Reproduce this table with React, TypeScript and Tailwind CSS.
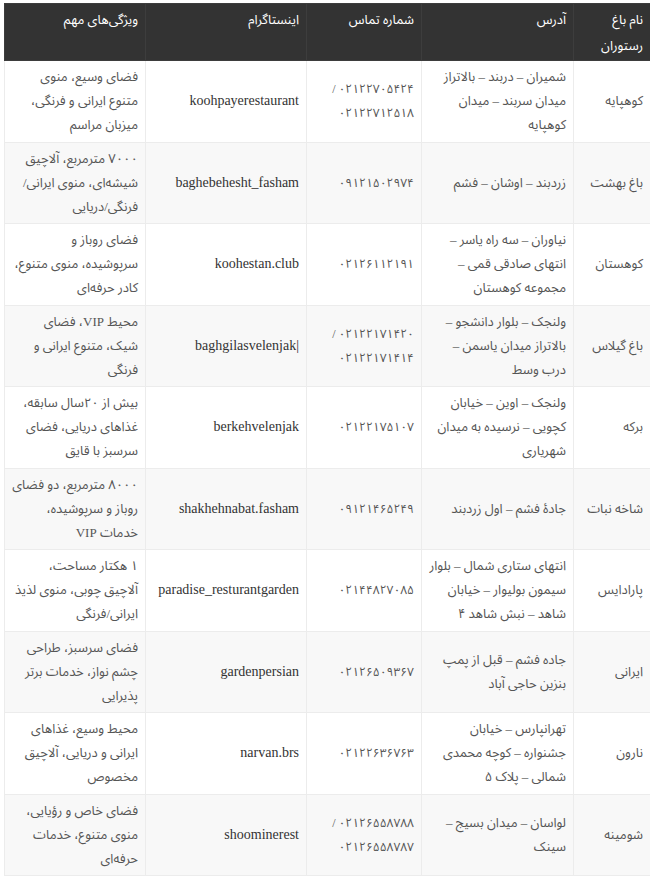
import React from 'react'

type Row = {
  name: string
  address: string
  phone: string[]
  insta: string
  features: string
}

const ROWS: Row[] = [
  {
    name: 'کوهپایه',
    address: 'شمیران – دربند – بالاتراز میدان سربند – میدان کوهپایه',
    phone: ['۰۲۱۲۲۷۰۵۴۲۴ /', '۰۲۱۲۲۷۱۲۵۱۸'],
    insta: 'koohpayerestaurant',
    features: 'فضای وسیع، منوی متنوع ایرانی و فرنگی، میزبان مراسم',
  },
  {
    name: 'باغ بهشت',
    address: 'زردبند – اوشان – فشم',
    phone: ['۰۹۱۲۱۵۰۲۹۷۴'],
    insta: 'baghebehesht_fasham',
    features: '۷۰۰۰ مترمربع، آلاچیق شیشه‌ای، منوی ایرانی/ فرنگی/دریایی',
  },
  {
    name: 'کوهستان',
    address: 'نیاوران – سه راه یاسر – انتهای صادقی قمی – مجموعه کوهستان',
    phone: ['۰۲۱۲۶۱۱۲۱۹۱'],
    insta: 'koohestan.club',
    features: 'فضای روباز و سرپوشیده، منوی متنوع، کادر حرفه‌ای',
  },
  {
    name: 'باغ گیلاس',
    address: 'ولنجک – بلوار دانشجو – بالاتراز میدان یاسمن – درب وسط',
    phone: ['۰۲۱۲۲۱۷۱۴۲۰ /', '۰۲۱۲۲۱۷۱۴۱۴'],
    insta: 'baghgilasvelenjak|',
    features: 'محیط VIP، فضای شیک، متنوع ایرانی و فرنگی',
  },
  {
    name: 'برکه',
    address: 'ولنجک – اوین – خیابان کچویی – نرسیده به میدان شهریاری',
    phone: ['۰۲۱۲۲۱۷۵۱۰۷'],
    insta: 'berkehvelenjak',
    features: 'بیش از ۲۰سال سابقه، غذاهای دریایی، فضای سرسبز با قایق',
  },
  {
    name: 'شاخه نبات',
    address: 'جادۀ فشم – اول زردبند',
    phone: ['۰۹۱۲۱۴۶۵۲۴۹'],
    insta: 'shakhehnabat.fasham',
    features: '۸۰۰۰ مترمربع، دو فضای روباز و سرپوشیده، خدمات VIP',
  },
  {
    name: 'پارادایس',
    address: 'انتهای ستاری شمال – بلوار سیمون بولیوار – خیابان شاهد – نبش شاهد ۴',
    phone: ['۰۲۱۴۴۸۲۷۰۸۵'],
    insta: 'paradise_resturantgarden',
    features: '۱ هکتار مساحت، آلاچیق چوبی، منوی لذیذ ایرانی/فرنگی',
  },
  {
    name: 'ایرانی',
    address: 'جاده فشم – قبل از پمپ بنزین حاجی آباد',
    phone: ['۰۲۱۲۶۵۰۹۳۶۷'],
    insta: 'gardenpersian',
    features: 'فضای سرسبز، طراحی چشم نواز، خدمات برتر پذیرایی',
  },
  {
    name: 'نارون',
    address: 'تهرانپارس – خیابان جشنواره – کوچه محمدی شمالی – پلاک ۵',
    phone: ['۰۲۱۲۲۶۳۶۷۶۳'],
    insta: 'narvan.brs',
    features: 'محیط وسیع، غذاهای ایرانی و دریایی، آلاچیق مخصوص',
  },
  {
    name: 'شومینه',
    address: 'لواسان – میدان بسیج – سینک',
    phone: ['۰۲۱۲۶۵۵۸۷۸۸ /', '۰۲۱۲۶۵۵۸۷۸۷'],
    insta: 'shoominerest',
    features: 'فضای خاص و رؤیایی، منوی متنوع، خدمات حرفه‌ای',
  },
]

const cell = 'border border-[#ececec] px-[7px] py-[4px] align-middle text-right'

export default function App() {
  return (
    <div className="bg-white min-h-[887px] pt-[3px] pl-[4px] overflow-hidden">
      <table
        dir="rtl"
        className="table-fixed border-collapse w-[646px] text-[13px] leading-[24px] text-[#555]"
        style={{ fontFamily: '"Liberation Serif", "Noto Sans Arabic", "Noto Naskh Arabic", "DejaVu Sans", sans-serif' }}
      >
        <colgroup>
          <col className="w-[77px]" />
          <col className="w-[152px]" />
          <col className="w-[115px]" />
          <col className="w-[161px]" />
          <col className="w-[141px]" />
        </colgroup>
        <thead>
          <tr className="bg-[#333333] text-white h-[57px]">
            {['نام باغ رستوران', 'آدرس', 'شماره تماس', 'اینستاگرام', 'ویژگی‌های مهم'].map((h) => (
              <th key={h} className="border border-[#3d3d3d] px-[7px] pt-[3px] align-top text-right font-normal leading-[26px]">
                {h}
              </th>
            ))}
          </tr>
        </thead>
        <tbody>
          {ROWS.map((r, i) => (
            <tr key={r.name} className={`h-[81.5px] ${i % 2 === 1 ? 'bg-[#f8f8f8]' : 'bg-white'}`}>
              <td className={cell}>{r.name}</td>
              <td className={cell}>{r.address}</td>
              <td className={`${cell} text-[12px]`}>
                {r.phone.map((p) => (
                  <div key={p}>{p}</div>
                ))}
              </td>
              <td className={`${cell} text-[14px] text-[#333]`}>
                <span dir="ltr" className="[unicode-bidi:isolate]">{r.insta}</span>
              </td>
              <td className={cell}>{r.features}</td>
            </tr>
          ))}
        </tbody>
      </table>
    </div>
  )
}
